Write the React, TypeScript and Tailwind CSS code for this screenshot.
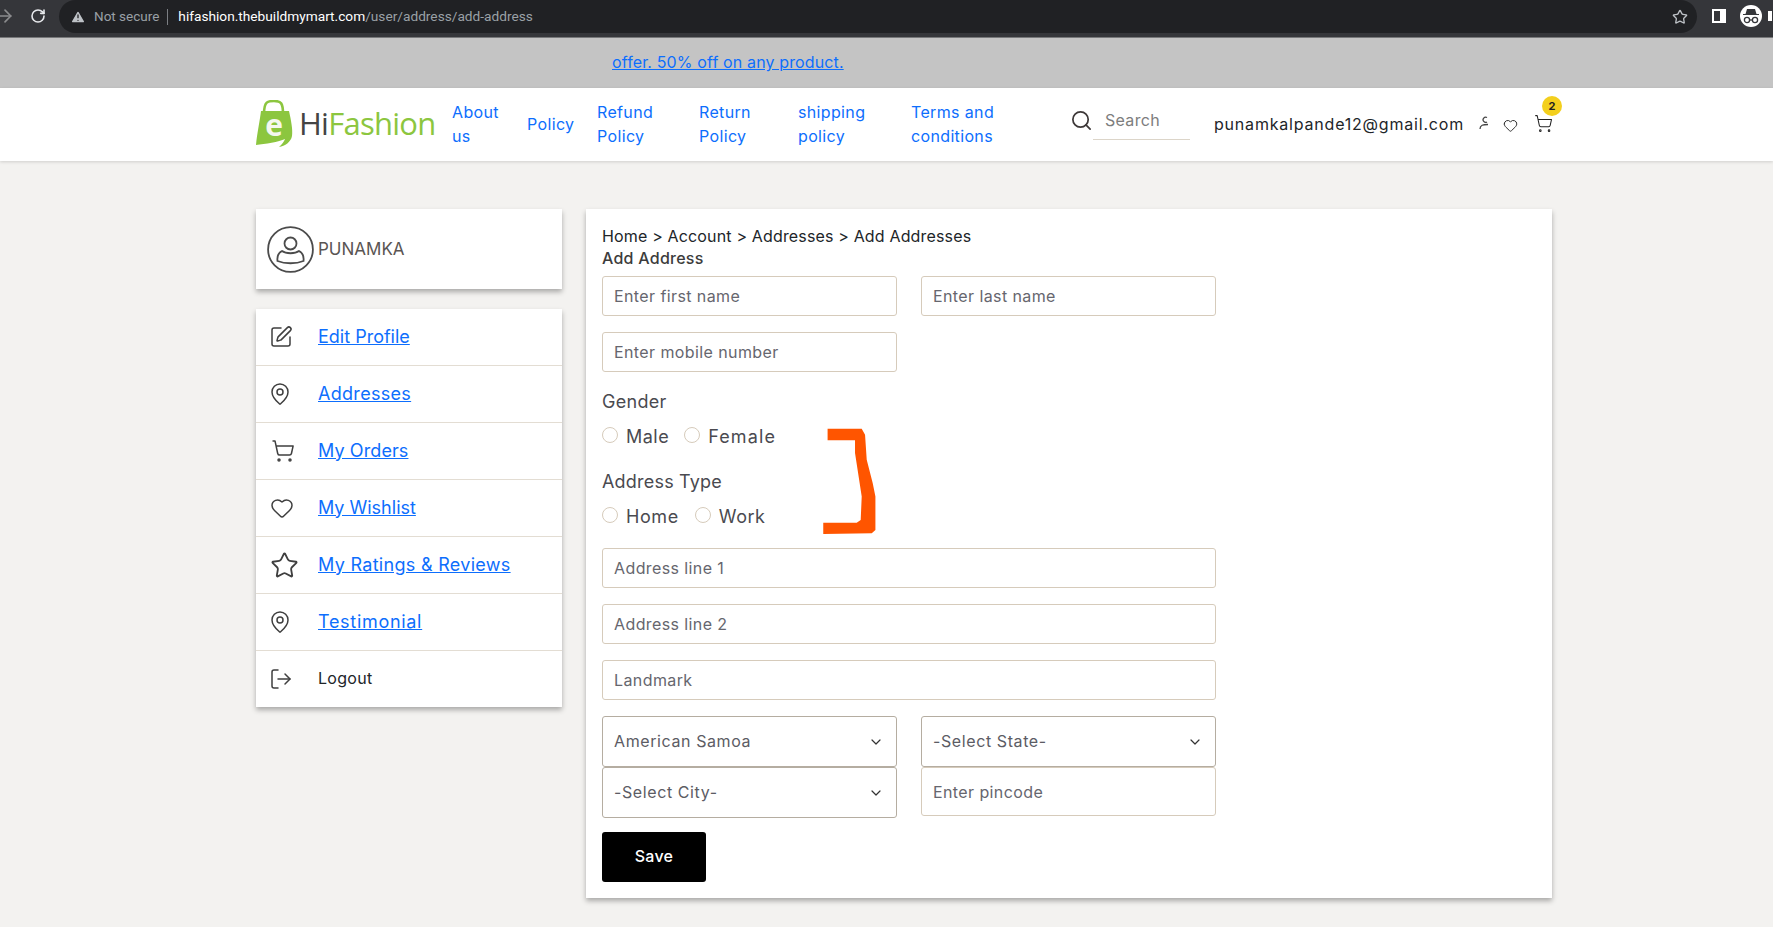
import { ArrowRight, ChevronDown, Heart, LogOut, MapPin, RotateCw, Search, ShoppingCart, SquarePen, Star, TriangleAlert } from "lucide-react";

const navItems = [
  { label: "About us", width: "w-[59px]", gap: "mr-[16px]" },
  { label: "Policy", width: "w-[54px]", gap: "mr-[16px]" },
  { label: "Refund Policy", width: "w-[86px]", gap: "mr-[16px]" },
  { label: "Return Policy", width: "w-[83px]", gap: "mr-[16px]" },
  { label: "shipping policy", width: "w-[97px]", gap: "mr-[16px]" },
  { label: "Terms and conditions", width: "w-[100px]", gap: "" },
];

const menuItems = [
  { label: "Edit Profile", Icon: SquarePen, size: 24, offset: "pl-[13px]", tracking: "tracking-[0px]", link: true },
  { label: "Addresses", Icon: MapPin, size: 24, offset: "pl-[12px]", tracking: "tracking-[0.3px]", link: true },
  { label: "My Orders", Icon: ShoppingCart, size: 24, offset: "pl-[15px]", tracking: "tracking-[0.1px]", link: true },
  { label: "My Wishlist", Icon: Heart, size: 24, offset: "pl-[14px]", tracking: "tracking-[0px]", link: true },
  { label: "My Ratings & Reviews", Icon: Star, size: 29, offset: "pl-[14px]", tracking: "tracking-[0.3px]", link: true },
  { label: "Testimonial", Icon: MapPin, size: 24, offset: "pl-[12px]", tracking: "tracking-[0.7px]", link: true },
  { label: "Logout", Icon: LogOut, size: 24, offset: "pl-[13px]", tracking: "tracking-[0.3px]", link: false },
];

function HiFashionLogo() {
  return (
    <div className="flex items-center w-[179px] shrink-0">
      <svg width="40" height="48" viewBox="0 0 40 48" className="shrink-0 mt-[1px]">
        <path d="M9 14 C9 1 13 1 19 1 C26 1 28 3 28 14" fill="none" stroke="#8cc63f" strokeWidth="2.6" />
        <path d="M6 11 L34 11 C36 20 38 30 37 36 C36 42 30 46 24 47 C27 44 29 42 30 39 C24 42 10 44 1 45 C2 34 5 20 6 11 Z" fill="#8cc63f" />
        <text x="19" y="36" textAnchor="middle" fontSize="30" fontWeight="700" fill="#f4f7ee" fontFamily="'Open Sans', sans-serif">e</text>
      </svg>
      <span className="ml-[4px] text-[31px] leading-none tracking-[-0.75px] font-['Open_Sans',sans-serif] text-[#8cc63f] whitespace-nowrap">
        <span className="text-[#444444]">Hi</span>Fashion
      </span>
    </div>
  );
}

function BrowserBar() {
  return (
    <div className="h-[38px] shrink-0 bg-[#35363a] border-b border-b-[#77787a] flex items-start overflow-hidden font-['Roboto',sans-serif]">
      <ArrowRight size={20} className="text-[#8b8c8e] -ml-[5px] mt-[6px] shrink-0" />
      <RotateCw size={16} strokeWidth={2.4} className="text-[#e8eaed] ml-[15px] mt-[8px] shrink-0" />
      <div className="ml-[13px] w-[1638px] h-[33px] rounded-r-full rounded-l-full bg-[#202124] flex items-center pl-[11px] shrink-0">
        <TriangleAlert size={16} fill="#bdc1c6" stroke="#202124" />
        <span className="ml-[8px] text-[13.5px] text-[#9aa0a6]">Not secure</span>
        <span className="ml-[8px] mr-[10px] w-px h-[16px] bg-[#7b7e83]" />
        <span className="text-[13.7px] text-white">hifashion.thebuildmymart.com<span className="text-[#9aa0a6]">/user/address/add-address</span></span>
        <Star size={16} className="ml-auto mr-[9px] text-[#bdc1c6]" />
      </div>
      <div className="ml-[15px] mt-[9px] w-[14px] h-[14px] border-[2px] border-white border-r-[6px] shrink-0" />
      <div className="ml-[14px] mt-[5px] w-[22px] h-[22px] rounded-full bg-white flex items-center justify-center shrink-0">
        <svg width="18" height="16" viewBox="0 0 18 16" fill="none">
          <path d="M5 1 H13 L14.5 6 H17 V7 H1 V6 H3.5 Z" fill="#35363a" />
          <circle cx="5" cy="12" r="2.6" stroke="#35363a" strokeWidth="1.3" />
          <circle cx="13" cy="12" r="2.6" stroke="#35363a" strokeWidth="1.3" />
          <path d="M7.5 12 H10.5" stroke="#35363a" strokeWidth="1.3" />
        </svg>
      </div>
      <div className="ml-[6px] mt-[11px] w-[4px] h-[10px] bg-white shrink-0" />
    </div>
  );
}

function SiteHeader() {
  return (
    <header className="h-[73px] shrink-0 bg-white shadow-[0_1px_3px_rgba(0,0,0,0.15)] relative flex items-center pl-[255px] pb-[2px] font-['Inter',sans-serif]">
      <HiFashionLogo />
      <nav className="ml-[18px] flex items-center shrink-0">
        {navItems.map((item) => (
          <a key={item.label} className={`${item.width} ${item.gap} text-[16px] leading-[24px] text-[#0d6efd] shrink-0 tracking-[0.35px]`}>
            {item.label}
          </a>
        ))}
      </nav>
      <div className="ml-[59px] -mt-[6px] flex items-center shrink-0">
        <Search size={23} strokeWidth={1.8} className="text-[#3d3838]" />
        <div className="h-[39px] w-[97px] border-b border-b-[#dcd5c9] pl-[12px] flex items-center text-[16px] tracking-[0.3px] text-[#7d7d7d] -mt-[1px]">Search</div>
      </div>
      <span className="ml-[24px] text-[16px] text-[#212529] tracking-[0.8px] whitespace-nowrap">punamkalpande12@gmail.com</span>
      <svg width="10" height="15" viewBox="0 0 10 15" fill="none" stroke="#444" strokeWidth="1.3" className="ml-[15px] shrink-0">
        <path d="M8 6 A2.6 2.6 0 1 1 8 1.5" />
        <path d="M1 13 C1 9 4 8.5 9 8.5" />
      </svg>
      <Heart size={15} strokeWidth={1.5} className="ml-[14px] mt-[3px] text-[#222] shrink-0" />
      <div className="relative ml-[16px] shrink-0">
        <ShoppingCart size={19} strokeWidth={1.3} className="text-[#222]" />
        <span className="absolute -top-[18px] left-[8px] w-[20px] h-[20px] rounded-full bg-[#f3cf1d] text-[#212121] text-[11px] font-bold flex items-center justify-center">2</span>
      </div>
    </header>
  );
}

function Sidebar() {
  return (
    <aside className="w-[306px] shrink-0 font-['Inter',sans-serif]">
      <div className="h-[80px] bg-white shadow-[0_3px_5px_rgba(0,0,0,0.3)] flex items-center pl-[11px]">
        <svg width="47" height="47" viewBox="0 0 47 47" fill="none" stroke="#4b4b4b" strokeWidth="1.8">
          <circle cx="23.5" cy="23.5" r="22.4" />
          <circle cx="23.5" cy="17.5" r="6" />
          <path d="M15 25 C11 27 10 31 10.5 35 C18 38 29 38 36.5 35 C37 31 36 27 32 25 C28 28 19 28 15 25 Z" />
        </svg>
        <span className="ml-[4px] mt-[2px] text-[17px] text-[#5a5553]">PUNAMKA</span>
      </div>
      <div className="mt-[20px] bg-white shadow-[0_3px_5px_rgba(0,0,0,0.3)]">
        {menuItems.map(({ label, Icon, size, offset, tracking, link }, i) => (
          <div key={label} className={`flex items-center ${i < menuItems.length - 1 ? "h-[57px] border-b border-b-[#e3ddd3]" : "h-[56px]"}`}>
            <div className={`w-[62px] shrink-0 ${offset}`}>
              <Icon size={size} strokeWidth={1.5} className="text-[#3f3f3f]" />
            </div>
            {link ? (
              <a className={`-mt-[2px] text-[18px] text-[#0d6efd] underline ${tracking}`}>{label}</a>
            ) : (
              <span className={`-mt-[2px] text-[16px] text-[#212529] ${tracking}`}>{label}</span>
            )}
          </div>
        ))}
      </div>
    </aside>
  );
}

const inputClass =
  "h-10 w-[295px] rounded-[3px] border border-[#d6cbbb] bg-white px-[11px] text-[16px] tracking-[0.4px] text-[#555] placeholder:text-[#66666e] outline-none shrink-0";

function SelectBox({ value }: { value: string }) {
  return (
    <div className="relative w-[295px] shrink-0">
      <select className="h-[51px] w-full appearance-none rounded-[3px] border border-[#b5ada1] bg-white px-[11px] pb-[2px] text-[16px] tracking-[0.6px] text-[#5c5c64] outline-none" defaultValue={value}>
        <option>{value}</option>
      </select>
      <ChevronDown size={16} strokeWidth={1.8} className="absolute right-[13px] top-[18px] text-[#333]" />
    </div>
  );
}

function RadioOption({ label, className }: { label: string; className: string }) {
  return (
    <label className="flex items-center">
      <input type="radio" className="appearance-none w-4 h-4 rounded-full border border-[#d6cbbb] bg-white -mt-[3px] shrink-0" />
      <span className={`ml-[8px] text-[18px] leading-[27px] text-[#4a4a50] ${className}`}>{label}</span>
    </label>
  );
}

function AddressForm() {
  return (
    <section className="relative w-[966px] h-[689px] shrink-0 bg-white shadow-[0_3px_5px_rgba(0,0,0,0.3)] pl-[16px] pt-[15px] font-['Inter',sans-serif]">
      <p className="text-[16px] leading-[24px] text-[#212529] tracking-[0.16px]">Home &gt; Account &gt; Addresses &gt; Add Addresses</p>
      <h2 className="text-[16px] leading-[20px] font-medium text-[#3c3c3c] tracking-[0.25px]">Add Address</h2>
      <div className="mt-[8px] flex gap-x-[24px]">
        <input className={inputClass} placeholder="Enter first name" />
        <input className={inputClass} placeholder="Enter last name" />
      </div>
      <input className={`${inputClass} mt-[16px] block`} placeholder="Enter mobile number" />
      <p className="mt-[16px] text-[18px] leading-[27px] text-[#4a4a50] tracking-[0.3px]">Gender</p>
      <div className="mt-[8px] flex">
        <RadioOption label="Male" className="mr-[15px] tracking-[0.5px]" />
        <RadioOption label="Female" className="tracking-[1.1px]" />
      </div>
      <p className="mt-[18px] text-[18px] leading-[27px] text-[#4a4a50] tracking-[0.2px]">Address Type</p>
      <div className="mt-[8px] flex">
        <RadioOption label="Home" className="mr-[16px] tracking-[0.6px]" />
        <RadioOption label="Work" className="tracking-[0.5px]" />
      </div>
      <div className="mt-[18px] flex flex-col gap-y-[16px] w-[614px]">
        <input className={`${inputClass} w-[614px]`} placeholder="Address line 1" />
        <input className={`${inputClass} w-[614px]`} placeholder="Address line 2" />
        <input className={`${inputClass} w-[614px]`} placeholder="Landmark" />
      </div>
      <div className="mt-[16px] flex gap-x-[24px]">
        <SelectBox value="American Samoa" />
        <SelectBox value="-Select State-" />
      </div>
      <div className="flex gap-x-[24px] items-start">
        <SelectBox value="-Select City-" />
        <input className={`${inputClass} h-[49px]`} placeholder="Enter pincode" />
      </div>
      <button className="mt-[14px] block w-[104px] h-[50px] pb-[2px] rounded-[3px] bg-black text-white text-[16px] font-medium tracking-[0.3px]">Save</button>
      {/* hand drawn annotation on top of the form */}
      <svg width="54" height="107" viewBox="700 145 160 320" className="absolute left-[237px] top-[219px]">
        <polygon points="713,147 815,147 825,165 830,240 848,310 856,350 856,450 845,460 700,462 700,428 800,428 812,420 815,350 795,220 795,182 713,182" fill="#ff5500" />
      </svg>
    </section>
  );
}

export default function App() {
  return (
    <div className="w-[1773px] h-[927px] overflow-hidden flex flex-col bg-[#f3f2f0]">
      <BrowserBar />
      <div className="h-[50px] shrink-0 bg-[#c4c4c4] flex items-center pl-[612px] pb-[2px] font-['Inter',sans-serif]">
        <a className="text-[16px] text-[#0d6efd] underline tracking-[0.13px]">offer. 50% off on any product.</a>
      </div>
      <SiteHeader />
      <main className="flex-1 flex items-start gap-x-[24px] pl-[256px] pt-[48px]">
        <Sidebar />
        <AddressForm />
      </main>
    </div>
  );
}
